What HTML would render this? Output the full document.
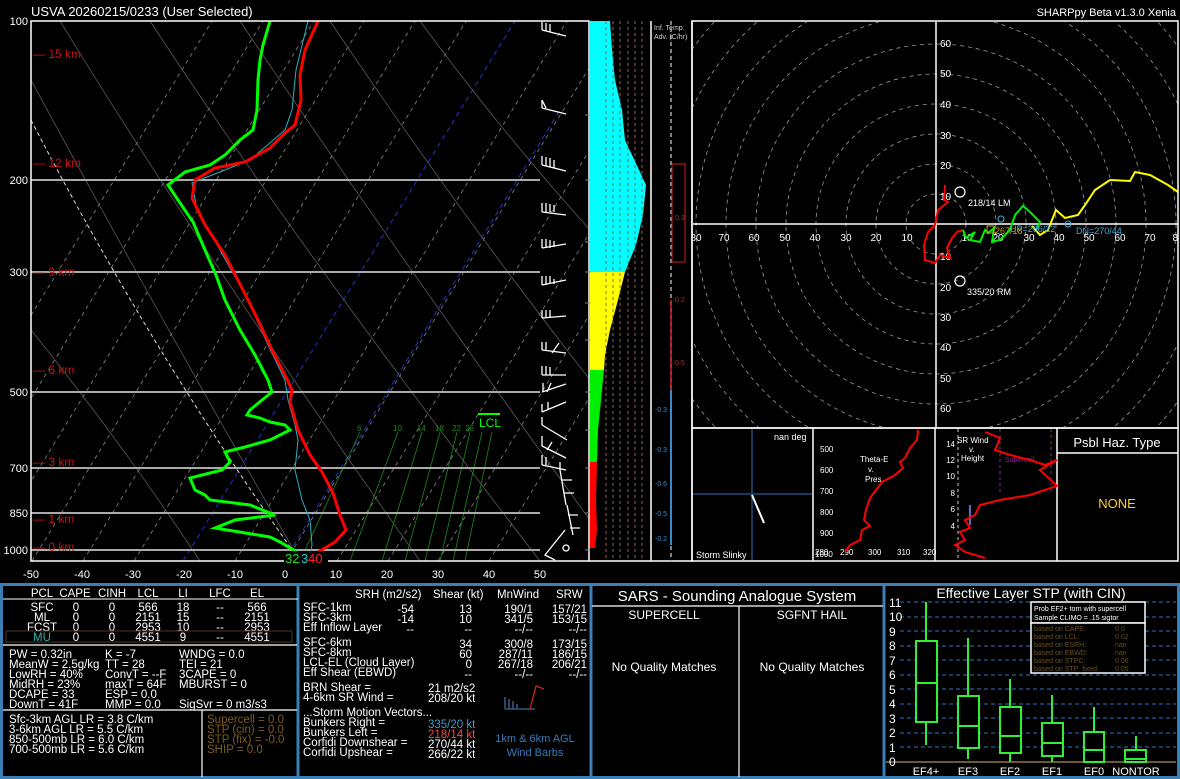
<!DOCTYPE html>
<html><head><meta charset="utf-8"><style>
html,body{margin:0;padding:0;background:#000;}
svg{display:block;font-family:"Liberation Sans",sans-serif;}
</style></head><body>
<svg width="1180" height="779" viewBox="0 0 1180 779" xmlns="http://www.w3.org/2000/svg">
<rect width="1180" height="779" fill="#000"/>
<text x="31" y="16" fill="#fff" font-size="13">USVA   20260215/0233  (User Selected)</text>
<text x="1176" y="16" fill="#fff" font-size="11" text-anchor="end">SHARPpy Beta v1.3.0 Xenia</text>

<!-- SKEW-T -->
<defs><clipPath id="sk"><rect x="31" y="21" width="558" height="540"/></clipPath>
<clipPath id="hd"><rect x="693" y="22" width="485" height="405"/></clipPath></defs>
<g clip-path="url(#sk)">
<g stroke="#888" stroke-width="0.8" stroke-dasharray="4,4" fill="none">
<line x1="-120" y1="561" x2="212" y2="21"/><line x1="-69" y1="561" x2="263" y2="21"/>
<line x1="-18" y1="561" x2="314" y2="21"/><line x1="32" y1="561" x2="364" y2="21"/>
<line x1="83" y1="561" x2="415" y2="21"/><line x1="134" y1="561" x2="466" y2="21"/>
<line x1="235" y1="561" x2="567" y2="21"/><line x1="286" y1="561" x2="618" y2="21"/>
<line x1="337" y1="561" x2="669" y2="21"/><line x1="388" y1="561" x2="720" y2="21"/>
<line x1="438" y1="561" x2="770" y2="21"/><line x1="489" y1="561" x2="821" y2="21"/>
</g>
<g stroke="#2233cc" stroke-width="1" stroke-dasharray="5,4" fill="none">
<line x1="183" y1="561" x2="515" y2="21"/><line x1="284" y1="561" x2="560" y2="110"/>
</g>
<g stroke="#666" stroke-width="0.7" fill="none">
<path d="M31 80 Q150 300 300 561"/><path d="M60 21 Q200 250 420 561"/><path d="M150 21 Q300 250 540 561"/>
<path d="M240 21 Q380 230 590 520"/><path d="M330 21 Q450 200 590 380"/><path d="M420 21 Q500 130 590 230"/>
<path d="M31 330 Q120 440 200 561"/>
</g>
<path d="M31 120 Q150 350 300 561" stroke="#ddd" stroke-width="1" stroke-dasharray="4,3" fill="none"/>
<g stroke="#1a8a1a" stroke-width="0.8">
<line x1="360" y1="432" x2="300" y2="561"/><line x1="398" y1="432" x2="350" y2="561"/><line x1="422" y1="432" x2="382" y2="561"/>
<line x1="440" y1="432" x2="405" y2="561"/><line x1="457" y1="432" x2="425" y2="561"/><line x1="470" y1="432" x2="440" y2="561"/>
<line x1="482" y1="432" x2="453" y2="561"/><line x1="492" y1="432" x2="465" y2="561"/>
</g>
<g fill="#1a8a1a" font-size="8"><text x="357" y="431">6</text><text x="393" y="431">10</text><text x="417" y="431">14</text><text x="435" y="431">18</text><text x="452" y="431">22</text><text x="465" y="431">26</text></g>
<g stroke="#aaa" stroke-width="2">
<line x1="31" y1="180" x2="540" y2="180"/><line x1="31" y1="272" x2="540" y2="272"/>
<line x1="31" y1="392" x2="540" y2="392"/><line x1="31" y1="468" x2="540" y2="468"/>
<line x1="31" y1="513" x2="540" y2="513"/><line x1="31" y1="550" x2="540" y2="550"/>
</g>
<polyline fill="none" stroke="#2ab0c0" stroke-width="1" points="308,21 296,70 292,110 285,130 250,160 192,183 197,210 220,250 248,300 268,345 285,380 288,400 295,425 298,440 295,470 302,500 310,520 312,545 310,555"/>
<polyline fill="none" stroke="#ff0000" stroke-width="3" points="318,21 305,50 300,75 301,100 295,125 285,133 270,148 245,162 215,168 195,180 192,198 205,225 225,255 243,290 258,320 272,350 285,375 292,390 290,402 298,430 310,455 322,472 333,493 340,515 346,530 335,542 318,552"/>
<polyline fill="none" stroke="#00ff00" stroke-width="3" points="270,21 263,45 260,60 258,80 257,110 253,130 240,140 225,155 210,165 185,172 168,185 178,200 193,222 205,250 216,275 225,300 240,330 255,355 268,380 272,392 262,400 250,410 247,415 260,418 270,422 285,425 290,430 270,440 245,447 225,452 230,462 222,470 190,478 195,490 205,495 210,500 250,505 275,515 235,520 215,528 270,537 280,542 297,552 300,558"/>
<line x1="478" y1="414" x2="500" y2="414" stroke="#00ff00" stroke-width="2"/>
<text x="479" y="427" fill="#00ff00" font-size="12">LCL</text>
<!-- wind barbs -->
<g stroke="#fff" stroke-width="1.3" fill="none">
<path d="M542 30 l24 6 M542 30 v-8 M546 31 v-8 M550 32 v-8"/>
<path d="M542 108 l24 6 M542 108 l0 -8 l4 8"/>
<path d="M542 165 l24 6 M542 165 v-9 M546 166 v-9 M550 167 v-9 M554 168 v-8"/>
<path d="M542 212 l24 3 M542 212 v-9 M546 212 v-9 M550 212 v-8 M554 212 v-7"/>
<path d="M542 248 l24 -4 M542 248 v-9 M546 248 v-9 M550 248 v-8 M554 247 v-6"/>
<path d="M542 285 l24 -5 M542 285 v-9 M546 285 v-9 M550 284 v-8 M554 284 v-5"/>
<path d="M542 318 l24 -2 M542 318 v-8 M546 318 v-8 M550 318 v-8"/>
<path d="M542 350 l24 3 M542 350 v-8 M546 350 v-8 M552 353 l7 -10"/>
<path d="M542 375 l24 0 M542 375 v-9 M546 375 v-9 M550 375 v-8"/>
<path d="M542 392 l24 -8 M543 392 v-9 M547 392 l4 -9"/>
<path d="M542 412 l24 -10 M542 412 v-8 M548 410 v-8"/>
<path d="M542 425 l25 15 M542 425 v-8"/>
<path d="M542 446 l24 12 M542 446 v-10 M547 450 l5 -8"/>
<path d="M542 465 l24 5 M542 465 v-10 M546 465 v-8"/>
<path d="M560 470 l6 35 M560 470 v-8 M562 480 h10 M564 493 h10"/>
<path d="M567 505 l6 30 M568 515 h10 M570 528 h10"/>
<path d="M565 530 l-20 25 l10 5"/><circle cx="566" cy="548" r="3"/>
</g>
</g>
<rect x="31" y="21" width="558" height="540" fill="none" stroke="#fff" stroke-width="1.5"/>
<rect x="540" y="21" width="49" height="540" fill="none" stroke="none"/>
<g fill="#fff" font-size="11" text-anchor="end">
<text x="28" y="25">100</text><text x="28" y="184">200</text><text x="28" y="276">300</text><text x="28" y="396">500</text>
<text x="28" y="472">700</text><text x="28" y="517">850</text><text x="28" y="554">1000</text>
</g>
<g fill="#cc1111" font-size="12">
<text x="33" y="58">— 15 km</text><text x="33" y="167">— 12 km</text><text x="33" y="276">— 9 km</text>
<text x="33" y="374">— 6 km</text><text x="33" y="466">— 3 km</text><text x="33" y="523">— 1 km</text><text x="33" y="551">— 0 km</text>
</g>
<g fill="#fff" font-size="11" text-anchor="middle">
<text x="31" y="578">-50</text><text x="82" y="578">-40</text><text x="133" y="578">-30</text><text x="184" y="578">-20</text>
<text x="235" y="578">-10</text><text x="285" y="578">0</text><text x="336" y="578">10</text><text x="387" y="578">20</text>
<text x="438" y="578">30</text><text x="489" y="578">40</text><text x="540" y="578">50</text>
</g>
<rect x="284" y="551" width="44" height="14" fill="#000"/>
<text x="285" y="563" fill="#22dd22" font-size="13">32</text><text x="301" y="563" fill="#22cccc" font-size="13">3</text><text x="308" y="563" fill="#ff2222" font-size="13">40</text>

<!-- CAPE bar panel -->
<polygon fill="#00ffff" points="590,21 610,21 612,50 615,80 622,110 625,140 640,172 646,185 643,215 636,245 625,272 590,272"/>
<polygon fill="#ffff00" points="590,272 625,272 618,300 610,330 605,355 604,370 590,370"/>
<polygon fill="#00ee00" points="590,370 604,370 601,400 598,430 597,462 590,462"/>
<polygon fill="#ff0000" points="590,462 597,462 596,500 597,530 595,548 590,548"/>
<g stroke="#a06050" stroke-width="1" stroke-dasharray="3,3">
<line x1="606" y1="21" x2="606" y2="561"/><line x1="613" y1="21" x2="613" y2="561"/><line x1="620" y1="21" x2="620" y2="561"/>
<line x1="628" y1="21" x2="628" y2="561"/><line x1="635" y1="21" x2="635" y2="561"/><line x1="642" y1="21" x2="642" y2="561"/>
</g>
<line x1="651" y1="21" x2="651" y2="561" stroke="#fff" stroke-width="1.5"/>
<line x1="589" y1="561" x2="693" y2="561" stroke="#fff" stroke-width="1.5"/>
<g stroke="#888" stroke-width="1">
<line x1="585" y1="115" x2="590" y2="115"/><line x1="585" y1="180" x2="590" y2="180"/><line x1="585" y1="242" x2="590" y2="242"/>
<line x1="585" y1="272" x2="590" y2="272"/><line x1="585" y1="303" x2="590" y2="303"/><line x1="585" y1="340" x2="590" y2="340"/>
<line x1="585" y1="392" x2="590" y2="392"/><line x1="585" y1="430" x2="590" y2="430"/><line x1="585" y1="468" x2="590" y2="468"/>
<line x1="585" y1="513" x2="590" y2="513"/><line x1="585" y1="550" x2="590" y2="550"/>
</g>
<!-- temp adv -->
<text x="654" y="30" fill="#ccc" font-size="7">Inf. Temp.</text>
<text x="654" y="39" fill="#ccc" font-size="7">Adv. (C/hr)</text>
<line x1="671" y1="21" x2="671" y2="561" stroke="#aaa" stroke-width="1.5" stroke-dasharray="4,3"/>
<rect x="672" y="164" width="13" height="98" fill="none" stroke="#cc2222"/>
<line x1="671" y1="300" x2="671" y2="390" stroke="#cc2222" stroke-width="1.5"/>
<line x1="671" y1="390" x2="671" y2="545" stroke="#3a8ac8" stroke-width="2"/>
<g font-size="7" fill="#cc2222"><text x="675" y="220">0.3</text><text x="675" y="302">0.2</text><text x="675" y="365">0.5</text></g>
<g font-size="7" fill="#3a8ac8"><text x="655" y="412">-0.3</text><text x="655" y="452">-0.3</text><text x="655" y="486">-0.6</text><text x="655" y="516">-0.5</text><text x="655" y="541">-0.2</text></g>
<line x1="692" y1="21" x2="692" y2="561" stroke="#fff" stroke-width="1.5"/>

<!-- HODOGRAPH -->
<g clip-path="url(#hd)">
<g fill="none" stroke="#999" stroke-width="0.8" stroke-dasharray="4,4">
<circle cx="936" cy="224" r="30"/><circle cx="936" cy="224" r="60"/><circle cx="936" cy="224" r="90"/><circle cx="936" cy="224" r="120"/>
<circle cx="936" cy="224" r="150"/><circle cx="936" cy="224" r="180"/><circle cx="936" cy="224" r="210"/><circle cx="936" cy="224" r="240"/>
<circle cx="936" cy="224" r="270"/><circle cx="936" cy="224" r="300"/>
</g>
<line x1="693" y1="224" x2="1178" y2="224" stroke="#fff" stroke-width="1.5"/>
<line x1="936" y1="22" x2="936" y2="427" stroke="#fff" stroke-width="1.5"/>
<g fill="#fff" font-size="10" text-anchor="middle">
<text x="696" y="241">80</text><text x="724" y="241">70</text><text x="754" y="241">60</text><text x="785" y="241">50</text><text x="815" y="241">40</text>
<text x="846" y="241">30</text><text x="876" y="241">20</text><text x="907" y="241">10</text>
<text x="967" y="241">10</text><text x="998" y="241">20</text><text x="1029" y="241">30</text><text x="1059" y="241">40</text><text x="1089" y="241">50</text>
<text x="1120" y="241">60</text><text x="1150" y="241">70</text><text x="1178" y="241">80</text>
</g>
<g fill="#fff" font-size="10">
<text x="940" y="47">60</text><text x="940" y="77">50</text><text x="940" y="108">40</text><text x="940" y="139">30</text><text x="940" y="169">20</text><text x="940" y="200">10</text>
<text x="940" y="260">10</text><text x="940" y="291">20</text><text x="940" y="321">30</text><text x="940" y="351">40</text><text x="940" y="382">50</text><text x="940" y="412">60</text>
</g>
<polyline fill="none" stroke="#ff0000" stroke-width="2" points="945,185 944,200 948,202 938,210 935,225 928,232 924,245 925,260 935,263 940,255 950,258 947,248 952,238 957,232 963,230"/>
<polyline fill="none" stroke="#00ee00" stroke-width="2" points="963,230 966,238 975,232 970,240 980,242 985,230 988,233 994,228 992,242 1000,240 1010,230 1015,215 1023,206 1030,212 1040,222 1036,230 1032,226"/>
<polyline fill="none" stroke="#ffff00" stroke-width="2" points="1032,226 1040,235 1048,230 1052,220 1056,210 1065,218 1078,215 1085,205 1095,190 1110,180 1130,181 1135,172 1150,175 1168,185 1178,192"/>
<circle cx="960" cy="192" r="5" fill="none" stroke="#fff" stroke-width="1.2"/>
<circle cx="960" cy="281" r="5" fill="none" stroke="#fff" stroke-width="1.2"/>
<circle cx="1001" cy="219" r="3" fill="none" stroke="#3ab0e0"/>
<circle cx="1068" cy="224" r="3" fill="none" stroke="#3ab0e0"/>
<rect x="987" y="226" width="7" height="7" fill="none" stroke="#c8a030"/>
<text x="968" y="206" fill="#fff" font-size="9">218/14 LM</text>
<text x="967" y="295" fill="#fff" font-size="9">335/20 RM</text>
<text x="995" y="234" fill="#c8a030" font-size="9">267/18</text>
<text x="1010" y="232" fill="#3ab0e0" font-size="9">UP=266/22</text>
<text x="1076" y="234" fill="#3ab0e0" font-size="9">DN=270/44</text>
</g>
<rect x="692" y="21" width="486" height="407" fill="none" stroke="#fff" stroke-width="1.5"/>

<!-- Lower small panels -->
<rect x="692" y="428" width="486" height="133" fill="none" stroke="#fff" stroke-width="1.5"/>
<line x1="813" y1="428" x2="813" y2="561" stroke="#fff" stroke-width="1.5"/>
<line x1="935" y1="428" x2="935" y2="561" stroke="#fff" stroke-width="1.5"/>
<line x1="1057" y1="428" x2="1057" y2="561" stroke="#fff" stroke-width="1.5"/>
<line x1="1057" y1="453" x2="1178" y2="453" stroke="#fff" stroke-width="1.5"/>
<!-- slinky -->
<line x1="693" y1="494" x2="812" y2="494" stroke="#1f4f7f" stroke-width="1.5"/>
<line x1="752" y1="429" x2="752" y2="560" stroke="#1f4f7f" stroke-width="1.5"/>
<line x1="752" y1="495" x2="764" y2="523" stroke="#fff" stroke-width="2"/>
<text x="774" y="440" fill="#fff" font-size="9">nan deg</text>
<text x="696" y="558" fill="#fff" font-size="9">Storm Slinky</text>
<!-- theta-e -->
<g fill="#fff" font-size="8">
<text x="820" y="452">500</text><text x="820" y="473">600</text><text x="820" y="494">700</text><text x="820" y="515">800</text><text x="820" y="536">900</text><text x="815" y="557">1000</text>
<text x="815" y="555">280</text><text x="840" y="555">290</text><text x="868" y="555">300</text><text x="897" y="555">310</text><text x="923" y="555">320</text>
<text x="860" y="462">Theta-E</text><text x="868" y="472">v.</text><text x="865" y="482">Pres</text>
</g>
<polyline fill="none" stroke="#ff0000" stroke-width="2" points="918,430 917,440 910,448 905,458 900,462 903,468 895,475 882,482 876,490 870,498 866,510 864,520 870,526 862,530 860,540 850,545 845,552"/>
<!-- SR wind -->
<line x1="958" y1="429" x2="958" y2="560" stroke="#aaa" stroke-width="1.2" stroke-dasharray="3,3"/>
<line x1="1000" y1="429" x2="1000" y2="495" stroke="#992299" stroke-width="1" stroke-dasharray="3,3"/>
<line x1="1051" y1="429" x2="1051" y2="495" stroke="#992299" stroke-width="1" stroke-dasharray="3,3"/>
<g fill="#fff" font-size="8" text-anchor="end">
<text x="955" y="447">14</text><text x="955" y="463">12</text><text x="955" y="479">10</text><text x="955" y="496">8</text><text x="955" y="512">6</text><text x="955" y="529">4</text>
</g>
<g fill="#fff" font-size="8"><text x="957" y="443">SR Wind</text><text x="969" y="452">v.</text><text x="961" y="461">Height</text></g>
<text x="1005" y="462" fill="#992299" font-size="7">Supercell</text>
<line x1="970" y1="505" x2="970" y2="525" stroke="#8888ff" stroke-width="1.5"/>
<polyline fill="none" stroke="#ff0000" stroke-width="2" points="985,432 1000,438 995,450 1010,455 1030,460 1045,465 1057,460 1040,470 1057,486 1030,495 1000,500 980,505 975,515 965,520 970,528 960,532 965,540 955,545 965,552 985,558"/>
<text x="1117" y="447" fill="#fff" font-size="13" text-anchor="middle">Psbl Haz. Type</text>
<text x="1117" y="508" fill="#ffcc33" font-size="13" text-anchor="middle">NONE</text>

<!-- BOTTOM -->
<rect x="1.5" y="584.5" width="1177" height="193" fill="none" stroke="#3a7fb5" stroke-width="3"/>
<line x1="298" y1="584" x2="298" y2="778" stroke="#3a7fb5" stroke-width="3"/>
<line x1="591" y1="584" x2="591" y2="778" stroke="#3a7fb5" stroke-width="3"/>
<line x1="884" y1="584" x2="884" y2="778" stroke="#3a7fb5" stroke-width="3"/>

<!-- panel 1 -->
<g fill="#fff" font-size="11.5" text-anchor="middle">
<text x="42" y="597">PCL</text><text x="75" y="597">CAPE</text><text x="112" y="597">CINH</text><text x="148" y="597">LCL</text><text x="183" y="597">LI</text><text x="220" y="597">LFC</text><text x="257" y="597">EL</text>
<text x="42" y="611">SFC</text><text x="76" y="611">0</text><text x="112" y="611">0</text><text x="148" y="611">566</text><text x="183" y="611">18</text><text x="220" y="611">--</text><text x="257" y="611">566</text>
<text x="42" y="621">ML</text><text x="76" y="621">0</text><text x="112" y="621">0</text><text x="148" y="621">2151</text><text x="183" y="621">15</text><text x="220" y="621">--</text><text x="257" y="621">2151</text>
<text x="42" y="631">FCST</text><text x="76" y="631">0</text><text x="112" y="631">0</text><text x="148" y="631">2953</text><text x="183" y="631">10</text><text x="220" y="631">--</text><text x="257" y="631">2953</text>
<text x="42" y="641" fill="#2ab0b0">MU</text><text x="76" y="641">0</text><text x="112" y="641">0</text><text x="148" y="641">4551</text><text x="183" y="641">9</text><text x="220" y="641">--</text><text x="257" y="641">4551</text>
</g>
<line x1="3" y1="599" x2="298" y2="599" stroke="#fff" stroke-width="1"/>
<rect x="6" y="631" width="286" height="11" fill="none" stroke="#4a3a2a"/>
<line x1="3" y1="645" x2="297" y2="645" stroke="#fff" stroke-width="1.2"/>
<g fill="#fff" font-size="11.5">
<text x="9" y="658">PW = 0.32in</text><text x="105" y="658">K = -7</text><text x="179" y="658">WNDG = 0.0</text>
<text x="9" y="668">MeanW = 2.5g/kg</text><text x="105" y="668">TT = 28</text><text x="179" y="668">TEI = 21</text>
<text x="9" y="678">LowRH = 40%</text><text x="105" y="678">ConvT = --F</text><text x="179" y="678">3CAPE = 0</text>
<text x="9" y="688">MidRH = 23%</text><text x="105" y="688">maxT = 64F</text><text x="179" y="688">MBURST = 0</text>
<text x="9" y="698">DCAPE = 33</text><text x="105" y="698">ESP = 0.0</text>
<text x="9" y="708">DownT = 41F</text><text x="105" y="708">MMP = 0.0</text><text x="179" y="708">SigSvr = 0 m3/s3</text>
</g>
<line x1="3" y1="710" x2="297" y2="710" stroke="#fff" stroke-width="1.2"/>
<line x1="202" y1="710" x2="202" y2="777" stroke="#fff" stroke-width="1.2"/>
<g fill="#fff" font-size="11.5">
<text x="9" y="723">Sfc-3km AGL LR = 3.8 C/km</text><text x="9" y="733">3-6km AGL LR = 5.5 C/km</text>
<text x="9" y="743">850-500mb LR = 6.0 C/km</text><text x="9" y="753">700-500mb LR = 5.6 C/km</text>
</g>
<g fill="#7a5c22" font-size="11.5">
<text x="207" y="723">Supercell = 0.0</text><text x="207" y="733">STP (cin) = 0.0</text><text x="207" y="743">STP (fix) = -0.0</text><text x="207" y="753">SHIP = 0.0</text>
</g>

<!-- panel 2 -->
<g fill="#fff" font-size="11.5">
<text x="355" y="598">SRH (m2/s2)</text><text x="433" y="598">Shear (kt)</text><text x="497" y="598">MnWind</text><text x="556" y="598">SRW</text>
<text x="303" y="611">SFC-1km</text><text x="303" y="621">SFC-3km</text><text x="303" y="631">Eff Inflow Layer</text>
<text x="303" y="646">SFC-6km</text><text x="303" y="656">SFC-8km</text><text x="303" y="666">LCL-EL (Cloud Layer)</text><text x="303" y="676">Eff Shear (EBWD)</text>
<text x="303" y="691">BRN Shear =</text><text x="303" y="701">4-6km SR Wind =</text>
<text x="303" y="716">...Storm Motion Vectors...</text>
<text x="303" y="726">Bunkers Right =</text><text x="303" y="736">Bunkers Left =</text><text x="303" y="746">Corfidi Downshear =</text><text x="303" y="756">Corfidi Upshear =</text>
</g>
<g fill="#fff" font-size="11.5" text-anchor="end">
<text x="414" y="613">-54</text><text x="414" y="623">-14</text><text x="414" y="633">--</text>
<text x="472" y="613">13</text><text x="472" y="623">10</text><text x="472" y="633">--</text>
<text x="472" y="648">34</text><text x="472" y="658">60</text><text x="472" y="668">0</text><text x="472" y="678">--</text>
<text x="533" y="613">190/1</text><text x="533" y="623">341/5</text><text x="533" y="633">--/--</text>
<text x="533" y="648">300/8</text><text x="533" y="658">287/11</text><text x="533" y="668">267/18</text><text x="533" y="678">--/--</text>
<text x="587" y="613">157/21</text><text x="587" y="623">153/15</text><text x="587" y="633">--/--</text>
<text x="587" y="648">173/15</text><text x="587" y="658">186/15</text><text x="587" y="668">206/21</text><text x="587" y="678">--/--</text>
</g>
<g fill="#fff" font-size="11.5">
<text x="428" y="692">21 m2/s2</text><text x="428" y="702">208/20 kt</text>
<text x="428" y="728" fill="#3a9ac8">335/20 kt</text><text x="428" y="738" fill="#ff4444">218/14 kt</text>
<text x="428" y="748">270/44 kt</text><text x="428" y="758">266/22 kt</text>
</g>
<g stroke="#3a6a9a" stroke-width="1.3" fill="none">
<path d="M505 709 h30 M505 709 v-12 M509 709 v-10 M513 709 v-8 M517 709 v-5"/>
</g>
<path d="M530 709 l6 -23 l8 3" stroke="#cc2222" stroke-width="1.3" fill="none"/>
<text x="535" y="742" fill="#3a7ab8" font-size="11" text-anchor="middle">1km &amp; 6km AGL</text>
<text x="535" y="756" fill="#3a7ab8" font-size="11" text-anchor="middle">Wind Barbs</text>

<!-- panel 3 SARS -->
<text x="737" y="601" fill="#fff" font-size="15" text-anchor="middle">SARS - Sounding Analogue System</text>
<line x1="592" y1="606" x2="883" y2="606" stroke="#fff" stroke-width="1.2"/>
<line x1="739" y1="606" x2="739" y2="777" stroke="#fff" stroke-width="1.2"/>
<text x="664" y="619" fill="#fff" font-size="12" text-anchor="middle">SUPERCELL</text>
<text x="812" y="619" fill="#fff" font-size="12" text-anchor="middle">SGFNT HAIL</text>
<text x="664" y="671" fill="#fff" font-size="12" text-anchor="middle">No Quality Matches</text>
<text x="812" y="671" fill="#fff" font-size="12" text-anchor="middle">No Quality Matches</text>

<!-- panel 4 STP -->
<text x="1031" y="598" fill="#fff" font-size="14" text-anchor="middle">Effective Layer STP (with CIN)</text>
<g stroke="#2a5aa0" stroke-width="1.2" stroke-dasharray="4,3">
<line x1="900" y1="602" x2="1176" y2="602"/><line x1="900" y1="617" x2="1176" y2="617"/><line x1="900" y1="631" x2="1176" y2="631"/>
<line x1="900" y1="646" x2="1176" y2="646"/><line x1="900" y1="660" x2="1176" y2="660"/><line x1="900" y1="675" x2="1176" y2="675"/>
<line x1="900" y1="689" x2="1176" y2="689"/><line x1="900" y1="704" x2="1176" y2="704"/><line x1="900" y1="718" x2="1176" y2="718"/>
<line x1="900" y1="733" x2="1176" y2="733"/><line x1="900" y1="747" x2="1176" y2="747"/>
</g>
<line x1="886" y1="762" x2="1176" y2="762" stroke="#6a5a3a" stroke-width="2"/>
<g fill="#fff" font-size="12">
<text x="889" y="607">11</text><text x="889" y="621">10</text><text x="889" y="636">9</text><text x="889" y="650">8</text><text x="889" y="665">7</text><text x="889" y="679">6</text>
<text x="889" y="694">5</text><text x="889" y="708">4</text><text x="889" y="723">3</text><text x="889" y="737">2</text><text x="889" y="752">1</text><text x="889" y="766">0</text>
</g>
<g fill="none" stroke="#33ee33" stroke-width="2">
<line x1="926" y1="602" x2="926" y2="745"/><rect x="916" y="641" width="21" height="81" fill="#000"/><line x1="916" y1="683" x2="937" y2="683"/>
<line x1="968" y1="638" x2="968" y2="759"/><rect x="958" y="696" width="21" height="52" fill="#000"/><line x1="958" y1="726" x2="979" y2="726"/>
<line x1="1010" y1="679" x2="1010" y2="762"/><rect x="1000" y="707" width="21" height="46" fill="#000"/><line x1="1000" y1="736" x2="1021" y2="736"/>
<line x1="1052" y1="695" x2="1052" y2="762"/><rect x="1042" y="723" width="21" height="33" fill="#000"/><line x1="1042" y1="743" x2="1063" y2="743"/>
<line x1="1094" y1="707" x2="1094" y2="762"/><rect x="1084" y="732" width="20" height="30" fill="#000"/><line x1="1084" y1="750" x2="1104" y2="750"/>
<line x1="1136" y1="736" x2="1136" y2="762"/><rect x="1125" y="750" width="21" height="12" fill="#000"/><line x1="1125" y1="759" x2="1146" y2="759"/>
</g>
<g fill="#fff" font-size="11" text-anchor="middle">
<text x="926" y="775">EF4+</text><text x="968" y="775">EF3</text><text x="1010" y="775">EF2</text><text x="1052" y="775">EF1</text><text x="1094" y="775">EF0</text><text x="1136" y="775">NONTOR</text>
</g>
<rect x="1031" y="602" width="114" height="21" fill="#000" stroke="#fff" stroke-width="1.5"/>
<rect x="1031" y="623" width="114" height="50" fill="#000" stroke="#fff" stroke-width="1.5"/>
<text x="1034" y="611" fill="#fff" font-size="7">Prob EF2+ torn with supercell</text>
<text x="1034" y="620" fill="#fff" font-size="7">Sample CLIMO = .15 sigtor</text>
<g fill="#6a5222" font-size="7">
<text x="1034" y="631">based on CAPE:</text><text x="1115" y="631">0.0</text>
<text x="1034" y="639">based on LCL:</text><text x="1115" y="639">0.02</text>
<text x="1034" y="647">based on ESRH:</text><text x="1115" y="647">nan</text>
<text x="1034" y="655">based on EBWD:</text><text x="1115" y="655">nan</text>
<text x="1034" y="663">based on STPC:</text><text x="1115" y="663">0.06</text>
<text x="1034" y="671">based on STP_fixed:</text><text x="1115" y="671">0.05</text>
</g>
</svg>
</body></html>
